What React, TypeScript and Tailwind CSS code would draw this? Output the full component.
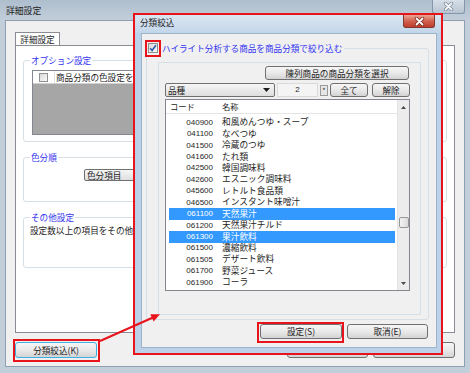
import React from 'react';

const jp = "font-['Noto_Sans_CJK_JP','Noto_Sans',sans-serif]";

// Win7 style push button (border colour passed separately)
const btn =
  'flex items-center justify-center rounded-[3px] border bg-linear-to-b from-[#f6f6f6] via-[#e9e9e9] to-[#d4d4d4] leading-none text-[#1e1e1e]';

const rows: [string, string, boolean?][] = [
  ['040900', '和風めんつゆ・スープ'],
  ['041100', 'なべつゆ'],
  ['041500', '冷蔵のつゆ'],
  ['041600', 'たれ類'],
  ['042500', '韓国調味料'],
  ['042600', 'エスニック調味料'],
  ['045600', 'レトルト食品類'],
  ['046500', 'インスタント味噌汁'],
  ['061100', '天然果汁', true],
  ['061200', '天然果汁チルド'],
  ['061300', '果汁飲料', true],
  ['061500', '濃縮飲料'],
  ['061505', 'デザート飲料'],
  ['061700', '野菜ジュース'],
  ['061900', 'コーラ'],
];

const CloseX = ({ fill, outline }: { fill: string; outline: string }) => (
  <svg width="11" height="9" viewBox="0 0 11 9">
    <path d="M2.5 1.5 L8.5 7.5 M8.5 1.5 L2.5 7.5" stroke={outline} strokeWidth="3.4" strokeLinecap="round" />
    <path d="M2.5 1.5 L8.5 7.5 M8.5 1.5 L2.5 7.5" stroke={fill} strokeWidth="1.8" strokeLinecap="round" />
  </svg>
);

const CheckBox = ({ checked, size = 10 }: { checked?: boolean; size?: number }) => (
  <div
    className="flex items-center justify-center border border-[#8e8f8f] bg-linear-to-br from-[#d9d9d9] to-[#fafafa]"
    style={{ width: size, height: size }}
  >
    {checked && (
      <svg width="8" height="8" viewBox="0 0 8 8">
        <path d="M1.2 4.3 L3.1 6.5 L6.9 1.2" fill="none" stroke="#2b55a8" strokeWidth="1.5" />
      </svg>
    )}
  </div>
);

const DownTri = () => (
  <svg width="7" height="4" viewBox="0 0 7 4">
    <path d="M0 0 L7 0 L3.5 4 Z" fill="#1e1e1e" />
  </svg>
);

const Group = ({ label, className, children }: { label: string; className: string; children?: React.ReactNode }) => (
  <div className={`rounded-[3px] border border-[#d5dfe5] ${className}`}>
    <div className="-mt-[5px] ml-[6px] w-fit bg-white px-px leading-[9px] text-[#3434f0]">{label}</div>
    {children}
  </div>
);

const Scrollbar = () => (
  <div className="flex w-[12px] flex-col border-l border-[#e3e3e3] bg-[#ececec]">
    <div className="flex h-[14px] items-center justify-center">
      <svg width="5" height="3" viewBox="0 0 5 3">
        <path d="M0 3 L2.5 0 L5 3 Z" fill="#4a4a4a" />
      </svg>
    </div>
    <div className="flex-1">
      <div className="mx-auto mt-[103px] h-[11px] w-[10px] rounded-[2px] border border-[#979797] bg-linear-to-r from-[#f3f3f3] to-[#dcdcdc]" />
    </div>
    <div className="flex h-[14px] items-center justify-center">
      <svg width="5" height="3" viewBox="0 0 5 3">
        <path d="M0 0 L5 0 L2.5 3 Z" fill="#4a4a4a" />
      </svg>
    </div>
  </div>
);

const CategoryList = () => (
  <div className="mt-[2px] flex h-[192px] border border-[#828790] bg-white">
    <div className="flex flex-1 flex-col">
      <div className="flex h-[14px] items-center border-b border-[#e5e5e5] text-[8.3px]">
        <span className="w-[56px] pl-[4px]">コード</span>
        <span>名称</span>
      </div>
      <div className="pl-[3px] pr-[2px] pt-[3px]">
        {rows.map(([code, name, sel]) => (
          <div
            key={code}
            className={`flex h-[11.43px] items-center ${sel ? 'bg-[#3399ff] text-white' : 'text-[#1e1e1e]'}`}
          >
            <span className="w-[44px] text-right font-['Liberation_Sans',sans-serif] text-[8px]">{code}</span>
            <span className="pl-[9px] text-[8.7px]">{name}</span>
          </div>
        ))}
      </div>
    </div>
    <Scrollbar />
  </div>
);

const FilterDialog = () => (
  <div className="absolute left-[133px] top-[13px] flex h-[342px] w-[310px] flex-col border-2 border-[#e8141c] bg-[#bcd2e8]">
    <div className="flex h-[18px] shrink-0 justify-between bg-linear-to-b from-[#dbe6f1] to-[#c2d6ea]">
      <span className="pl-[5px] pt-[3px]">分類絞込</span>
      <div className="mr-[6px] flex h-[13px] w-[32px] items-center justify-center rounded-b-[3px] border border-t-0 border-[#7e3a31] bg-linear-to-b from-[#e9a797] via-[#d2604f] to-[#c03a2b]">
        <CloseX fill="#ffffff" outline="#7a2a22" />
      </div>
    </div>
    <div className="ml-[6px] mr-[4px] flex h-[315px] flex-col border border-[#9db3c9] bg-[#f0f0f0]">
      <div className="ml-[4px] mr-[7px] mt-[14px] h-[272px] rounded-[3px] border border-[#d5dfe5]">
        <div className="-mt-[6px] ml-px flex h-[10px] w-fit items-center gap-[4px] bg-[#f0f0f0] pr-[2px]">
          <CheckBox checked />
          <span className="text-[#3434f0]">ハイライト分析する商品を商品分類で絞り込む</span>
        </div>
        <div className="ml-[11px] mt-[9px] flex h-[253px] w-[263px] flex-col border border-[#d5dfe5] pl-[6px] pr-[10px] pt-[3px]">
          <div className="flex justify-end">
            <div className={`${btn} mr-px h-[14px] w-[144px] border-[#707070]`}>陳列商品の商品分類を選択</div>
          </div>
          <div className="mt-[3px] flex h-[14px] items-center">
            <div className="flex h-[14px] w-[110px] items-center justify-between rounded-[2px] border border-[#707070] bg-linear-to-b from-[#f6f6f6] to-[#dedede] pl-[2px] pr-[4px]">
              <span>品種</span>
              <DownTri />
            </div>
            <div className="ml-[2px] flex h-[14px] w-[41px] items-center justify-center border border-[#dadada] bg-[#f4f4f4] font-['Liberation_Sans',sans-serif] text-[8px]">
              2
            </div>
            <div className="ml-[2px] flex h-[11px] w-[8px] items-center justify-center border border-[#9a9a9a] bg-[#e6e6e6] text-[7px]">
              *
            </div>
            <div className={`${btn} ml-[2px] h-[14px] w-[38px] border-[#707070]`}>全て</div>
            <div className={`${btn} ml-[4px] h-[14px] w-[38px] border-[#707070]`}>解除</div>
          </div>
          <CategoryList />
        </div>
      </div>
      <div className="mt-[4px] flex justify-end gap-[5px] pr-[8px]">
        <div className={`${btn} h-[15px] w-[82px] border-[#707070]`}>設定(S)</div>
        <div className={`${btn} h-[15px] w-[81px] border-[#707070]`}>取消(E)</div>
      </div>
    </div>
  </div>
);

export default function App() {
  return (
    <div
      className={`relative flex h-[373px] w-[470px] flex-col overflow-hidden bg-[#c2ceda] text-[8.6px] leading-none text-[#1e1e1e] ${jp}`}
    >
      {/* outer window title bar */}
      <div className="flex h-[20px] shrink-0 justify-between bg-linear-to-b from-[#aebecd] to-[#c2ceda]">
        <span className="pl-[6px] pt-[7px] text-[8.8px]">詳細設定</span>
        <div className="mr-[5px] flex h-[14px] w-[33px] items-center justify-center rounded-b-[3px] border border-t-0 border-[#8596a8] bg-linear-to-b from-[#d6dfe8] to-[#b8c5d2]">
          <CloseX fill="#f4f6f8" outline="#7f8d9c" />
        </div>
      </div>

      {/* outer window client */}
      <div className="mx-[5px] mb-[6px] flex flex-1 flex-col border border-[#8d9fb1] bg-[#f0f0f0] px-[9px] pt-[11px]">
        <div className="flex h-[13px] w-[45px] items-center justify-center border border-b-0 border-[#898c95] bg-white">
          詳細設定
        </div>
        <div className="flex h-[288px] flex-col border border-[#898c95] bg-white px-[7px]">
          <Group label="オプション設定" className="mt-[14px] h-[82px]">
            <div className="ml-[8px] mr-[6px] mt-[5px] flex h-[65px] flex-col border border-[#828790] bg-[#a6a6a6]">
              <div className="flex h-[13px] border-b border-[#d0d0d0] bg-white">
                <div className="flex w-[22px] items-center justify-center border-r border-[#e2e2e2]">
                  <CheckBox size={9} />
                </div>
                <div className="flex items-center pl-px">商品分類の色設定を使用する</div>
              </div>
            </div>
          </Group>
          <Group label="色分順" className="mt-[15px] h-[45px]">
            <div className="ml-[60px] mt-[7px] flex h-[12px] w-[130px] items-center justify-between rounded-[2px] border border-[#707070] bg-linear-to-b from-[#f6f6f6] to-[#dedede] pl-[2px] pr-[4px]">
              <span>色分項目</span>
              <DownTri />
            </div>
          </Group>
          <Group label="その他設定" className="mt-[15px] h-[51px]">
            <div className="ml-[6px] mt-[4px]">設定数以上の項目をその他にまとめる</div>
          </Group>
        </div>
        <div className="mt-[9px] flex">
          <div className={`${btn} h-[16px] w-[82px] border-[#3cb0e4]`}>分類絞込(K)</div>
          <div className={`${btn} ml-auto h-[16px] w-[81px] border-[#707070]`}>OK</div>
          <div className={`${btn} ml-[5px] h-[16px] w-[82px] border-[#707070]`}>キャンセル</div>
        </div>
      </div>

      <FilterDialog />

      {/* red annotations */}
      <div className="absolute left-[145px] top-[40px] h-[17px] w-[16px] border-2 border-[#e8141c]" />
      <div className="absolute left-[257px] top-[322px] h-[21px] w-[87px] border-2 border-[#e8141c]" />
      <div className="absolute left-[13px] top-[339px] h-[23px] w-[87px] border-2 border-[#e8141c]" />
      <svg className="pointer-events-none absolute left-0 top-0" width="470" height="373">
        <line x1="100" y1="341" x2="153" y2="317.5" stroke="#e8141c" strokeWidth="2" />
        <path d="M160 314.3 L153.6 321.5 L150.3 314.2 Z" fill="#e8141c" />
      </svg>
    </div>
  );
}
